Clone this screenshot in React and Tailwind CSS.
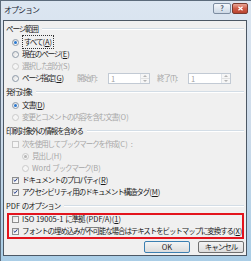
import React from 'react';

// Vista-style Office "オプション" dialog (PDF export options)

const FONT = "font-['Noto_Sans_CJK_JP','Noto_Sans',sans-serif]";

function Radio({ checked, disabled }) {
  return (
    <span
      className={`flex h-[7px] w-[7px] shrink-0 items-center justify-center rounded-full border ${
        disabled ? 'border-[#cacaca] bg-[#f5f5f5]' : 'border-[#8e9aa8] bg-gradient-to-br from-[#dcdcdc] to-white'
      }`}
    >
      {checked && (
        <span className={`h-[3px] w-[3px] rounded-full ${disabled ? 'bg-[#b5b5b5]' : 'bg-[#2a78d0]'}`} />
      )}
    </span>
  );
}

function Check({ checked, disabled }) {
  return (
    <span
      className={`flex h-[7px] w-[7px] shrink-0 items-center justify-center border ${
        disabled ? 'border-[#c8c8c8] bg-[#f5f5f5]' : 'border-[#8e8f8f] bg-gradient-to-br from-[#e2e2e2] to-white'
      }`}
    >
      {checked && (
        <svg viewBox="0 0 7 7" className="h-[6px] w-[6px]">
          <path d="M1 3.6 L2.8 5.4 L6 1.2" fill="none" stroke="#263f8c" strokeWidth="1.4" />
        </svg>
      )}
    </span>
  );
}

function Label({ children, k, dim, focus }) {
  return (
    <span
      className={`whitespace-nowrap tracking-[-1.1px] ${dim ? 'text-[#a6a6a6]' : 'text-[#1b1b1b]'} ${
        focus ? 'border border-dotted border-[#333] px-[1px]' : ''
      }`}
    >
      {children}
      {k && (
        <span className="tracking-normal">
          (<span className={dim ? '' : 'underline'}>{k}</span>)
        </span>
      )}
    </span>
  );
}

function Header({ children }) {
  return (
    <div className="mb-[1px] mt-[2px] flex h-[12px] items-center pl-[2px] pr-[2px]">
      <span className="whitespace-nowrap tracking-[-1.1px] text-[#1b1b1b]">{children}</span>
      <div className="ml-[4px] h-[2px] flex-1 border-b border-t border-b-white border-t-[#d3dde6]" />
    </div>
  );
}

function SpinBox({ width }) {
  return (
    <div className={`flex h-[11px] ${width} items-stretch border border-[#c2cad4] bg-white`}>
      <span className="flex-1 pl-[2px] text-[7.5px] leading-[9px] text-[#a0a0a0]">1</span>
      <div className="flex w-[9px] flex-col border-l border-[#dfe3e8] bg-[#f6f6f6]">
        <div className="flex flex-1 items-center justify-center border-b border-[#e2e2e2]">
          <span className="h-0 w-0 border-x-[2px] border-b-[2px] border-x-transparent border-b-[#b4b4b4]" />
        </div>
        <div className="flex flex-1 items-center justify-center">
          <span className="h-0 w-0 border-x-[2px] border-t-[2px] border-x-transparent border-t-[#b4b4b4]" />
        </div>
      </div>
    </div>
  );
}

export default function App() {
  const row = 'flex h-[12px] items-center gap-[3px]';

  return (
    <div className={`relative h-[261px] w-[251px] overflow-hidden ${FONT} text-[7.5px] leading-[12px]`}>
      <div className="flex h-[261px] w-[251px] flex-col border-l border-t border-[#5c6b7b] bg-gradient-to-b from-[#dce6f1] via-[#cddbea] to-[#a9cde6]">
        {/* --- Title bar --- */}
        <div className="flex h-[19px] shrink-0 items-start justify-between">
          <span className="pl-[3px] pt-[3px] text-[8px] leading-[12px] tracking-[-1px] text-[#1c2735]">オプション</span>
          <div className="mr-[3px] mt-[2px] flex gap-[1px]">
            <div className="flex h-[11px] w-[18px] items-center justify-center rounded-[2px] border border-[#7d8da1] bg-gradient-to-b from-[#f4f7fb] to-[#cdd9e6] text-[7px] font-bold leading-none text-[#44546a]">
              ?
            </div>
            <div className="flex h-[11px] w-[16px] items-center justify-center rounded-[2px] border border-[#7a3b30] bg-gradient-to-b from-[#e9a595] via-[#cf5c48] to-[#b9442f]">
              <svg viewBox="0 0 8 6" className="h-[5px] w-[7px]">
                <path d="M1.5 0.8 L6.5 5.2 M6.5 0.8 L1.5 5.2" stroke="white" strokeWidth="1.5" />
              </svg>
            </div>
          </div>
        </div>

        {/* --- Client area --- */}
        <div className="ml-[2px] h-[236px] w-[244px] shrink-0 border border-[#4c5865] bg-[#f0f0f0]">
          <Header>ページ範囲</Header>
          <div className={`${row} pl-[8px]`}>
            <Radio checked />
            <Label k="A" focus>すべて</Label>
          </div>
          <div className={`${row} pl-[8px]`}>
            <Radio />
            <Label k="E">現在のページ</Label>
          </div>
          <div className={`${row} pl-[8px]`}>
            <Radio disabled />
            <Label k="S" dim>選択した部分</Label>
          </div>
          <div className={`${row} pl-[8px]`}>
            <Radio />
            <span className="w-[52px]">
              <Label k="G">ページ指定</Label>
            </span>
            <span className="w-[28px]">
              <Label dim>開始(F):</Label>
            </span>
            <SpinBox width="w-[42px]" />
            <span className="ml-[4px] w-[28px]">
              <Label dim>終了(T):</Label>
            </span>
            <SpinBox width="w-[43px]" />
          </div>

          <Header>発行対象</Header>
          <div className={`${row} pl-[8px]`}>
            <Radio checked />
            <Label k="D">文書</Label>
          </div>
          <div className={`${row} pl-[8px]`}>
            <Radio disabled />
            <Label k="O" dim>変更とコメントの内容を含む文書</Label>
          </div>

          <Header>印刷対象外の情報を含める</Header>
          <div className={`${row} pl-[8px]`}>
            <Check disabled />
            <Label k="C" dim>次を使用してブックマークを作成</Label>
            <span className="tracking-normal text-[#a6a6a6]">:</span>
          </div>
          <div className={`${row} pl-[18px]`}>
            <Radio checked disabled />
            <Label k="H" dim>見出し</Label>
          </div>
          <div className={`${row} pl-[18px]`}>
            <Radio disabled />
            <Label k="B" dim>
              <span className="tracking-normal">Word </span>ブックマーク
            </Label>
          </div>
          <div className={`${row} pl-[8px]`}>
            <Check checked />
            <Label k="R">ドキュメントのプロパティ</Label>
          </div>
          <div className={`${row} pl-[8px]`}>
            <Check checked />
            <Label k="M">アクセシビリティ用のドキュメント構造タグ</Label>
          </div>

          <Header>
            <span className="tracking-normal">PDF </span>のオプション
          </Header>
          <div className={`${row} pl-[8px]`}>
            <Check />
            <Label k="1">
              <span className="tracking-normal">ISO 19005-1 </span>に準拠
              <span className="tracking-normal"> (PDF/A)</span>
            </Label>
          </div>
          <div className={`${row} pl-[8px]`}>
            <Check checked />
            <Label k="X">フォントの埋め込みが不可能な場合はテキストをビットマップに変換する</Label>
          </div>

          <div className="mt-[4px] flex justify-end gap-[8px] pr-[2px]">
            <button className="flex h-[12px] w-[46px] items-center justify-center rounded-[2px] border border-[#3c7fb1] bg-gradient-to-b from-[#f4f4f4] to-[#dcdcdc] text-[7.5px] leading-none text-[#1b1b1b]">
              OK
            </button>
            <button className="flex h-[12px] w-[46px] items-center justify-center rounded-[2px] border border-[#707070] bg-gradient-to-b from-[#f4f4f4] to-[#dcdcdc] text-[7.5px] leading-none tracking-[-1px] text-[#1b1b1b]">
              キャンセル
            </button>
          </div>
        </div>
      </div>

      {/* red highlight drawn over the screenshot */}
      <div className="absolute left-[7px] top-[213px] h-[26px] w-[237px] border-2 border-[#e3141d]" />
    </div>
  );
}
